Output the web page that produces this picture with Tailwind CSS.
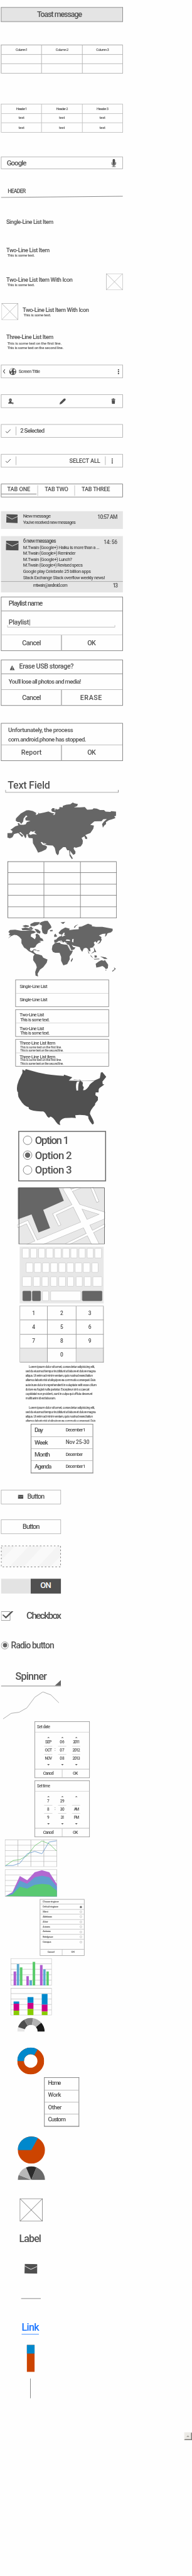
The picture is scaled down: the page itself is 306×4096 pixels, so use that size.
<!DOCTYPE html>
<html lang="en">
<head>
<meta charset="utf-8">
<title>Android wireframe stencils</title>
<script src="https://cdn.jsdelivr.net/npm/@tailwindcss/browser@4"></script>
</head>
<body class="bg-[#fefefe]">
<svg width="0" height="0" class="absolute">
  <symbol id="mail" viewBox="0 0 81 63"><path fill="#505050" d="M2 0L81 3 80 63 0 60Z"/><path d="M1 14L40 35 80 17" fill="none" stroke="#f4f4f4" stroke-width="3.5"/></symbol>
  <symbol id="check" viewBox="0 0 36 28"><path d="M2 15L12 25 34 2" fill="none" stroke="#505050" stroke-width="4"/></symbol>
  <symbol id="dots" viewBox="0 0 10 32"><path fill="#505050" d="M1 0h9v8h-9zM1 12h9v8h-9zM1 24h9v8h-9z"/></symbol>
  <symbol id="up" viewBox="0 0 16 9"><path fill="#606060" d="M0 9L8 0 16 9Z"/></symbol>
  <symbol id="down" viewBox="0 0 16 9"><path fill="#606060" d="M0 0L8 9 16 0Z"/></symbol>
  <symbol id="cross" viewBox="0 0 105 105" preserveAspectRatio="none"><rect x="1.5" y="1.5" width="102" height="102" fill="none" stroke="#aaa" stroke-width="3"/><path d="M1 1L104 104" stroke="#808080" stroke-width="2"/><path d="M104 1L1 104" stroke="#b5b5b5" stroke-width="3"/></symbol>
</svg>
<div class="h-[4096px] w-[306px] overflow-hidden">
<main class="flex w-[400px] h-[5362px] origin-top-left scale-x-[0.765] scale-y-[0.7639] flex-col items-start pt-[15px] font-['Roboto','Liberation_Sans',sans-serif] font-medium text-[#505050] whitespace-nowrap leading-none [&>*]:shrink-0">

  <!-- Toast -->
  <div class="ml-[2px] flex h-[31px] w-[254px] items-center justify-center border border-[#7a7a7a] border-b-2 border-b-[#b0b0b0] bg-[#e4e4e4] pr-[11px] text-[16px]"><span data-w="93">Toast message</span></div>

  <!-- Tables -->
  <div class="mt-[47px] ml-[2px] grid h-[60px] w-[254px] grid-cols-3 grid-rows-3 border-t border-l border-[#8e8e8e] text-[7.5px] [&>*]:flex [&>*]:items-center [&>*]:justify-center [&>*]:border-r [&>*]:border-b [&>*]:border-[#a5a5a5]">
    <div><span data-w="24">Column 1</span></div><div><span data-w="26">Column 2</span></div><div><span data-w="26">Column 3</span></div>
    <div></div><div></div><div></div><div></div><div></div><div></div>
  </div>
  <div class="mt-[63px] ml-[2px] grid h-[60px] w-[254px] grid-cols-3 grid-rows-3 border-t border-l border-[#b0b0b0] text-[7.5px] [&>*]:flex [&>*]:items-center [&>*]:justify-center [&>*]:border-r [&>*]:border-b [&>*]:border-[#b5b5b5]">
    <div><span data-w="22">Header 1</span></div><div><span data-w="24">Header 2</span></div><div><span data-w="24">Header 3</span></div>
    <div><span data-w="12">text</span></div><div><span data-w="12">text</span></div><div><span data-w="12">text</span></div>
    <div><span data-w="12">text</span></div><div><span data-w="12">text</span></div><div><span data-w="12">text</span></div>
  </div>

  <!-- Search -->
  <div class="mt-[50px] ml-[2px] flex h-[26px] w-[254px] items-center justify-between border border-[#a5a5a5] pr-[13px] pl-[11px] text-[15px]"><span data-w="40">Google</span>
    <svg class="h-[17px] w-[10px]" viewBox="0 0 30 51"><rect x="8" width="15" height="36" rx="7" fill="#505050"/><path d="M2 19V27Q4 39 15 39T28 27V19M15 39V47M4 48H27" fill="none" stroke="#505050" stroke-width="4"/></svg></div>

  <!-- Header -->
  <div class="mt-[38px] ml-[2px] h-[22px] w-[254px]"><div class="h-[17px] pt-[3px] pl-[14px] text-[11.5px]"><span data-w="37">HEADER</span></div><svg class="h-[5px] w-[254px]" viewBox="0 0 254 5"><path d="M0 4L254 1.5" stroke="#666"/></svg></div>

  <!-- List items -->
  <div class="mt-[44px] ml-[13px] h-[16px] text-[12px]"><span data-w="98">Single-Line List Item</span></div>
  <div class="mt-[43px] ml-[13px] h-[24px] text-[12px]"><span data-w="90">Two-Line List Item</span><p class="pt-px pl-[2px] text-[8px]"><span data-w="57">This is some text.</span></p></div>
  <div class="mt-[30px] ml-[13px] flex h-[35px] w-[242.5px] justify-between pt-0"><div class="pt-[8px] text-[12px]"><span data-w="138">Two-Line List Item With Icon</span><p class="pt-px pl-[2px] text-[8px]"><span data-w="57">This is some text.</span></p></div><svg class="size-[35px]"><use href="#cross"/></svg></div>
  <div class="mt-[27px] ml-[3px] flex h-[35px] gap-[9px]"><svg class="size-[35px]"><use href="#cross"/></svg><div class="pt-[8px] text-[12px]"><span data-w="138">Two-Line List Item With Icon</span><p class="pt-px pl-[2px] text-[8px]"><span data-w="57">This is some text.</span></p></div></div>
  <div class="mt-[30px] ml-[13px] h-[34px] text-[12px]"><span data-w="98">Three-Line List Item</span><div class="pt-[2px] pl-[2px] text-[8px] leading-[9px]"><p><span data-w="113">This is some text on the first line.</span></p><p><span data-w="117">This is some text on the second line.</span></p></div></div>

  <!-- Action bars -->
  <div class="mt-[29px] ml-[2px] flex h-[28px] w-[254px] items-center border border-[#a5a5a5] pr-[7px] pl-[3px] text-[9.5px]">
    <svg class="h-[10px] w-[5px]" viewBox="0 0 15 30"><path d="M13 3L3 15 13 27" fill="none" stroke="#505050" stroke-width="4"/></svg>
    <svg class="ml-[8px] size-[15px]" viewBox="0 0 45 45"><circle cx="22.500" cy="22.500" r="22" fill="#505050"/><path fill="#fefefe" d="M14 4L22 2 21 8 14 12 18 17 12 23 4 15 7 9ZM27 10L34 7 40 14 36 22 29 18ZM13 27L21 29 17 40 12 37ZM31 27L38 26 37 34 31 38Z"/></svg>
    <span class="ml-[5px]" data-w="44">Screen Title</span><svg class="ml-auto h-[11px] w-[3.500px]"><use href="#dots"/></svg></div>
  <div class="mt-[34px] ml-[2px] flex h-[28px] w-[254px] items-center justify-between border border-[#a5a5a5] pr-[15px] pl-[14px]">
    <svg class="h-[13px] w-[12px]" viewBox="0 0 36 39"><path fill="#505050" d="M5 10Q6 1 14 1T23 10Q23 18 18 22L26 27 27 33H0L2 26 10 22Q5 18 5 10Z"/><path d="M29 24V38M22 31H36" stroke="#505050" stroke-width="3"/><path d="M9 9H19V15H9Z" fill="#999"/></svg>
    <svg class="h-[13px] w-[13px]" viewBox="0 0 38 38"><path fill="#505050" d="M0 38L3 26 26 3Q32-2 36 3T35 13L13 33Z"/></svg>
    <svg class="h-[12px] w-[8.500px]" viewBox="0 0 26 36"><path fill="#505050" d="M0 5L8 4 9 0H17L18 4 26 5V10H0ZM2 12H24L22 36H4Z"/></svg></div>
  <div class="mt-[34px] ml-[2px] flex h-[28px] w-[254px] items-center border border-[#a5a5a5] pl-[8px] text-[12.5px]"><svg class="h-[9px] w-[12px]"><use href="#check"/></svg><i class="mr-[8px] ml-[10px] h-[18px] w-px bg-[#a5a5a5]"></i><span data-w="50">2 Selected</span></div>
  <div class="mt-[34px] ml-[2px] flex h-[28px] w-[254px] items-center border border-[#a5a5a5] pr-[20px] pl-[8px] text-[12px]"><svg class="h-[9px] w-[12px]"><use href="#check"/></svg><i class="ml-[10px] h-[18px] w-px bg-[#a5a5a5]"></i><span class="ml-auto" data-w="64">SELECT ALL</span><i class="mr-[12px] ml-[10px] h-[18px] w-px bg-[#a5a5a5]"></i><svg class="h-[11px] w-[3.500px]"><use href="#dots"/></svg></div>

  <!-- Tabs -->
  <div class="mt-[34px] ml-[2px] flex h-[28px] w-[254px] border border-[#6b6b6b] pt-[2px] text-[12px]">
    <div class="h-[19px] w-[73px] border-b border-[#606060] pt-[3px] pl-[12px]"><span data-w="48">TAB ONE</span></div>
    <div class="ml-[2px] h-[22px] w-[78px] border-x border-[#b5b5b5] pt-[3px] pl-[14px]"><span data-w="49">TAB TWO</span></div>
    <div class="pt-[3px] pl-[14px]"><span data-w="59">TAB THREE</span></div></div>

  <!-- Notifications -->
  <div class="mt-[29px] ml-[2px] flex h-[37px] w-[254px] bg-[#e5e5e5] pt-[6px] pr-[12px] pl-[11px] text-[10.5px]"><svg class="h-[19px] w-[24px]"><use href="#mail"/></svg>
    <div class="ml-[11px]"><p><span data-w="57">New message</span></p><p class="pt-[2px] text-[9.500px]"><span data-w="109">You've received new messages</span></p></div><span class="mt-px ml-auto text-[11px]" data-w="41">10:57 AM</span></div>
  <div class="mt-[15px] ml-[2px] h-[117px] w-[254px] bg-[#e5e5e5] text-[9.5px]">
    <div class="flex h-[95px] border-b border-[#999] pt-[5px] pr-[12px] pl-[10px]"><svg class="mt-[4px] h-[21px] w-[27px]"><use href="#mail"/></svg>
      <div class="ml-[9px] w-[150px] leading-[12.600px]"><p class="text-[11px]"><span data-w="68">6 new messages</span></p><p><span data-w="159">M.Twain (Google+) Haiku is more than a ...</span></p><p><span data-w="109">M.Twain (Google+) Reminder</span></p><p><span data-w="102">M.Twain (Google+) Lunch?</span></p><p><span data-w="124">M.Twain (Google+) Revised specs</span></p><p><span data-w="141">Google play Celebrate 25 billion apps</span></p><p><span data-w="170">Stack Exchange Stack overflow weekly news!</span></p></div>
      <span class="mt-[2px] ml-auto text-[11px]" data-w="28">14: 56</span></div>
    <div class="flex items-center justify-between pt-[3px] pr-[12px] pl-[67px] text-[9px]"><span data-w="71">mtwain@android.com</span><span class="text-[11px]" data-w="9">13</span></div></div>

  <!-- Dialogs -->
  <div class="mt-[9px] ml-[2px] flex h-[113px] w-[254px] flex-col border border-[#666] text-[14px]">
    <div class="h-[29px] border-b border-[#777] pt-[6px] pl-[15px]"><span data-w="70">Playlist name</span></div>
    <div class="h-[50px] border-b border-[#c5c5c5] px-[12px] pt-[16px]"><div class="h-[17px] pl-[3px]"><span data-w="45">Playlist|</span></div><svg class="-mt-[4px] h-[5px] w-[225px]" viewBox="0 0 225 5"><path d="M.5 0V4.500H224.500V0" fill="none" stroke="#999"/></svg></div>
    <div class="grid flex-1 grid-cols-2"><div class="flex items-center border-r-2 border-[#b0b0b0] pl-[43px]"><span data-w="39">Cancel</span></div><div class="flex items-center pl-[53px]"><span data-w="17">OK</span></div></div></div>
  <div class="mt-[18px] ml-[2px] flex h-[96px] w-[254px] flex-col border border-[#666] text-[14px]">
    <div class="flex h-[29px] items-start border-b border-[#777] pt-[6px] pl-[17px]"><svg class="mt-[5px] mr-[9px] h-[10px] w-[11px]" viewBox="0 0 32 30"><path fill="#505050" d="M15 0L32 30H0Z"/><path d="M16 11V20M16 23V27" stroke="#fefefe" stroke-width="3"/></svg><span data-w="113">Erase USB storage?</span></div>
    <div class="h-[33px] border-b border-[#a5a5a5] pt-[10px] pl-[15px] text-[12.500px]"><span data-w="150">You'll lose all photos and media!</span></div>
    <div class="grid flex-1 grid-cols-2"><div class="flex items-center border-r-2 border-[#b0b0b0] pl-[43px]"><span data-w="39">Cancel</span></div><div class="flex items-center pl-[38px]"><span data-w="46">ERASE</span></div></div></div>
  <div class="mt-[36px] ml-[2px] flex h-[79px] w-[254px] flex-col border border-[#666] text-[12.500px]">
    <div class="h-[45px] border-b border-[#aaa] pt-[4px] pl-[14px] leading-[20px]"><p><span data-w="135">Unfortunately, the process</span></p><p><span data-w="162">com.android.phone has stopped.</span></p></div>
    <div class="grid flex-1 grid-cols-2 text-[14px]"><div class="flex items-center border-r-2 border-[#b0b0b0] pb-[3px] pl-[41px]"><span data-w="43">Report</span></div><div class="flex items-center pb-[3px] pl-[53px]"><span data-w="17">OK</span></div></div></div>

  <!-- Text field -->
  <div class="mt-[41px] ml-[11px] h-[25px] w-[236px]"><div class="h-[19px] pl-[5px] text-[21px]"><span data-w="88">Text Field</span></div><svg class="h-[6px] w-[236px]" viewBox="0 0 236 6"><path d="M.5 0V5.500H235.500V0" fill="none" stroke="#666"/></svg></div>

  <!-- Eurasia -->
  <svg class="mt-[20px] ml-[15px] h-[119px] w-[227px]" viewBox="45 960 681 357"><path fill="#666" d="M46 1153L75 1152 78 1140 65 1131 75 1125 95 1110 115 1103 110 1092 120 1090 124 1100 145 1101 160 1098 168 1084 190 1076 160 1073 158 1058 172 1048 163 1042 148 1060 144 1082 132 1096 124 1084 110 1083 98 1075 100 1060 130 1030 165 1010 180 1009 205 1014 226 1026 224 1040 238 1034 240 1025 246 1030 275 1024 303 1017 322 1026 340 1030 345 1022 325 1018 320 1006 328 996 340 996 344 1014 348 998 356 1005 370 1001 372 990 392 992 393 982 415 975 440 972 455 961 464 966 487 971 482 984 462 992 500 992 530 990 545 1006 578 1004 585 997 605 999 625 1008 650 1008 660 1018 690 1020 695 1015 725 1018 725 1045 714 1048 722 1058 700 1066 680 1072 662 1084 663 1096 652 1104 643 1118 638 1096 650 1080 668 1064 645 1066 635 1078 590 1079 564 1101 587 1105 583 1125 565 1152 542 1160 533 1165 545 1180 544 1190 533 1188 528 1172 510 1182 518 1200 516 1218 505 1235 475 1244 463 1240 460 1250 472 1268 470 1282 458 1288 445 1272 438 1262 438 1282 455 1310 450 1316 435 1294 432 1260 420 1260 410 1240 395 1240 370 1263 367 1282 360 1291 350 1278 342 1244 330 1230 300 1228 280 1224 262 1208 254 1210 266 1225 285 1230 295 1238 288 1254 262 1266 238 1274 225 1248 206 1215 204 1185 180 1182 172 1165 178 1160 165 1160 164 1178 158 1184 148 1165 128 1146 120 1150 146 1168 138 1177 114 1152 98 1156 88 1158 78 1178 62 1185 46 1180Z"/><path fill="#fefefe" d="M180 1157L192 1140 204 1145 222 1138 214 1148 230 1160 205 1158 190 1163ZM275 1213L292 1220 278 1222ZM340 1030L348 1020 342 1038 330 1040Z"/></svg>

  <!-- Empty grid -->
  <div class="mt-[4px] ml-[16px] grid h-[118px] w-[227px] grid-cols-3 grid-rows-5 border-t border-l border-[#555] [&>*]:border-r [&>*]:border-b [&>*]:border-[#6c6c6c]"><i></i><i></i><i></i><i></i><i></i><i></i><i></i><i></i><i></i><i></i><i></i><i></i><i></i><i></i><i></i></div>

  <!-- World -->
  <svg class="mt-[5px] ml-[16px] h-[117px] w-[226px]" viewBox="48 348 678 351"><path fill="#666" d="M52 420L62 407 95 405 132 412 160 412 190 408 210 412 225 420 212 428 195 432 192 448 205 455 218 465 225 450 222 435 232 430 245 440 252 455 266 462 272 476 245 475 258 482 240 490 228 500 222 512 212 518 190 518 186 532 195 540 205 535 215 526 208 540 216 550 228 558 240 560 262 566 270 580 297 592 292 612 270 640 250 655 235 680 238 698 222 692 220 670 230 640 224 620 207 596 208 572 216 560 200 550 180 540 158 520 145 496 160 524 150 516 134 490 134 465 120 450 105 440 88 438 70 446 50 460 68 442 54 440 62 428ZM256 358L280 350 298 350 318 380 322 392 300 408 294 432 280 434 266 425 260 400 262 380 244 370ZM312 408L328 406 330 414 314 416ZM134 398L160 392 190 398 210 394 200 406 170 408 140 408ZM140 382L160 376 180 380 180 388 155 390ZM190 370L215 358 250 358 240 374 215 384 190 382ZM215 400L238 404 254 418 250 430 232 425ZM184 388H200V396H184ZM378 360L408 356 395 370ZM462 392Q466 378 490 373Q470 382 468 395ZM338 470L352 466 360 456 372 448 382 446 385 436 370 432 366 424 382 406 408 392 436 400 432 408 460 404 492 402 492 388 510 386 550 368 575 376 574 384 600 388 640 388 704 400 704 412 694 422 672 428 664 444 656 450 660 430 640 432 618 442 634 452 630 470 612 474 604 488 596 478 586 486 592 500 580 516 562 520 566 540 556 540 548 524 538 518 524 522 514 544 504 530 498 514 460 506 448 500 458 514 472 516 464 528 442 536 424 500 412 488 424 486 410 486 404 480 396 486 382 472 376 474 396 488 370 474 358 482 352 486 340 486ZM344 488L374 486 380 494 400 498 420 500 440 538 456 536 448 555 435 572 436 590 420 620 396 628 382 600 382 575 372 550 345 550 330 544 324 528 328 505ZM442 600L452 582 456 588 446 608ZM338 440L346 430 358 448 340 452ZM630 455L636 468 626 488 608 496 622 482ZM586 512L594 530 602 545 590 546ZM568 556L590 538 586 548ZM546 530L560 555 554 554ZM565 562L580 580 585 586 568 572ZM586 588L620 586 622 590 590 592ZM590 566L604 566 606 578 592 580ZM626 572L660 578 672 588 652 588 640 580ZM598 618L618 604 634 596 650 600 655 594 676 624 674 646 662 652 652 640 640 632 622 638 602 642ZM658 656H666L662 662ZM712 640L724 650 704 668 700 664 716 652ZM208 528L224 530 232 536 208 532ZM232 535H246V539H232ZM68 530L76 534 72 532Z"/><path fill="#fefefe" d="M410 474L416 466 434 468 440 476ZM452 464L460 462 458 486 450 480ZM386 440L398 424 405 426 400 438 410 440 396 446 388 450ZM424 500L430 500 446 532 442 534Z"/></svg>

  <!-- Lists -->
  <div class="mt-[6px] ml-[32px] grid h-[57px] w-[195px] grid-rows-2 border border-[#777] text-[10px]"><div class="flex items-center border-b border-[#ccc] pl-[8px]"><span data-w="57">Single-Line List</span></div><div class="flex items-center pl-[8px]"><span data-w="57">Single-Line List</span></div></div>
  <div class="mt-[5px] ml-[32px] grid h-[57px] w-[195px] grid-rows-2 border border-[#777] text-[10px]"><div class="border-b border-[#ccc] pt-[6px] pl-[8px]"><p><span data-w="50">Two-Line List</span></p><p class="pt-px pl-px text-[9px]"><span data-w="61">This is some text.</span></p></div><div class="pt-[6px] pl-[8px]"><p><span data-w="50">Two-Line List</span></p><p class="pt-px pl-px text-[9px]"><span data-w="61">This is some text.</span></p></div></div>
  <div class="mt-[5px] ml-[32px] grid h-[57px] w-[195px] grid-rows-2 border border-[#777] text-[9.500px]"><div class="border-b border-[#ccc] pt-[3px] pl-[8px]"><p><span data-w="74">Three-Line List Item</span></p><div class="pl-px text-[6.500px] leading-[7px]"><p><span data-w="86">This is some text on the first line.</span></p><p><span data-w="90">This is some text on the second line.</span></p></div></div><div class="pt-[3px] pl-[8px]"><p><span data-w="74">Three-Line List Item</span></p><div class="pl-px text-[6.500px] leading-[7px]"><p><span data-w="86">This is some text on the first line.</span></p><p><span data-w="90">This is some text on the second line.</span></p></div></div></div>

  <!-- United States -->
  <svg class="mt-[5px] ml-[35px] h-[117px] w-[187px]" viewBox="105 -75 561 351"><path fill="#505050" d="M140 -72L156 -64 161 -74 240 -52Q320 -34 398 -32L400 -39 452 -23 430 -3 462 -10 500 -8 507 0 588 -2 624 -18 630 -52 640 -55 664 -26 640 4 642 20 652 22 622 44 617 52 616 72 598 72 596 88 612 100 612 120 595 140 594 150Q562 184 562 205L580 240Q590 260 585 268L577 272 562 252 553 236 551 220 530 214 498 212 470 214 474 232 450 230 405 232Q374 240 373 262L377 276 362 270 350 256Q330 224 314 223L306 231 295 222Q280 192 270 190 200 192 180 174L180 165Q150 160 122 112 110 95 113 72 102 65 108 25L118 -5 140 -50Z"/><path fill="#fefefe" d="M478 60Q470 20 482 4L498 3Q488 10 488 60ZM506 3L528 0H590Q558 20 556 32 535 62 519 57L524 40 516 28 518 10ZM430 -2L452 -12 468 -22 460 -8 490 -10 505 -1Z"/></svg>

  <!-- Radio group -->
  <div class="mt-[12px] ml-[38px] flex h-[105px] w-[183px] flex-col gap-[12px] border-2 border-[#6a6a6a] pt-[8px] pl-[8px] text-[22px]">
    <div class="flex h-[19px] items-center gap-[6px]"><i class="size-[19px] rounded-full border border-[#666]"></i><span data-w="69">Option 1</span></div>
    <div class="flex h-[19px] items-center gap-[6px]"><i class="flex size-[19px] items-center justify-center rounded-full border border-[#666]"><i class="size-[11px] rounded-full bg-[#666]"></i></i><span data-w="76">Option 2</span></div>
    <div class="flex h-[19px] items-center gap-[6px]"><i class="size-[19px] rounded-full border border-[#666]"></i><span data-w="76">Option 3</span></div></div>

  <!-- Street map -->
  <svg class="mt-[12px] ml-[36px] h-[119px] w-[183px]" viewBox="108 660 549 357"><rect x="112" y="664" width="541" height="352" fill="#e8e8e8"/>
    <g fill="none" stroke-linejoin="miter"><g stroke="#b8b8b8"><path stroke-width="19" d="M108 906L170 878 228 998M374 900L340 830 460 774"/><path stroke-width="18" d="M412 1020L560 948 660 896M448 680L500 660M573 660L612 754"/><path stroke-width="46" d="M412 660L475 770 600 1024"/><path stroke-width="42" d="M170 1038L300 984 540 885 660 834"/><path stroke-width="26" d="M490 778L660 830"/></g>
    <g stroke="#fefefe"><path stroke-width="14" d="M110 905L170 878 228 998M373 898L340 830 460 774"/><path stroke-width="13" d="M412 1020L560 948 660 896M448 680L500 660M573 660L611 751"/><path stroke-width="41" d="M412 660L475 770 600 1024"/><path stroke-width="37" d="M170 1038L300 984 540 885 660 834"/><path stroke-width="21" d="M490 778L660 830"/></g></g>
    <path fill="#666" d="M112 664H366L399 745 270 802 313 916 241 943 197 830 112 861Z"/><rect x="118.500" y="664.500" width="534" height="351" fill="none" stroke="#484848" stroke-width="3"/></svg>

  <!-- Keyboard -->
  <div class="mt-[5px] ml-[41px] flex h-[118px] w-[175px] flex-col gap-[8.500px] bg-[#e8e8e8] pt-[3px] [&>div]:flex [&>div]:h-[21px] [&>div]:justify-between [&_i]:w-[14.500px] [&_i]:rounded-[2px] [&_i]:border [&_i]:border-[#ccc] [&_i]:bg-[#fefefe]">
    <div class="pr-[4px] pl-[5px]"><i></i><i></i><i></i><i></i><i></i><i></i><i></i><i></i><i></i><i></i></div>
    <div class="pr-[11px] pl-[13px]"><i></i><i></i><i></i><i></i><i></i><i></i><i></i><i></i><i></i></div>
    <div class="pr-[3px] pl-[5px]"><i class="w-[20px]!"></i><i></i><i></i><i></i><i></i><i></i><i></i><i></i><i class="w-[20px]!"></i></div>
    <div class="pr-[3px] pl-[6px]"><i class="w-[18px]! border-[#666]! bg-[#666]!"></i><i class="w-[18px]! border-[#666]! bg-[#666]!"></i><i></i><i class="w-[64px]!"></i><i class="w-[42px]! border-[#666]! bg-[#666]!"></i></div></div>

  <!-- Keypad -->
  <div class="mt-[5px] ml-[41px] grid h-[118px] w-[175px] grid-cols-[57px_60px_57px] grid-rows-4 border-t border-l border-[#aaa] bg-[#fefefe] text-[11px] [&>*]:flex [&>*]:items-center [&>*]:justify-center [&>*]:border-r [&>*]:border-b [&>*]:border-[#888]">
    <div>1</div><div>2</div><div>3</div><div>4</div><div>5</div><div>6</div><div>7</div><div>8</div><div>9</div><div class="bg-[#e8e8e8]"></div><div>0</div><div class="bg-[#e8e8e8]"></div></div>

  <!-- Paragraphs -->
  <div class="mt-[5px] ml-[53px] h-[118px] w-[160px] overflow-hidden text-[6.500px] leading-[9.450px]">
    <p class="pl-[7px]"><span data-w="137">Lorem ipsum dolor sit amet, consectetur adipisicing elit,</span></p><p><span data-w="146">sed do eiusmod tempor incididunt ut labore et dolore magna</span></p><p><span data-w="140">aliqua. Ut enim ad minim veniam, quis nostrud exercitation</span></p><p><span data-w="146">ullamco laboris nisi ut aliquip ex ea commodo consequat. Duis</span></p><p><span data-w="148">aute irure dolor in reprehenderit in voluptate velit esse cillum</span></p><p><span data-w="133">dolore eu fugiat nulla pariatur. Excepteur sint occaecat</span></p><p><span data-w="139">cupidatat non proident, sunt in culpa qui officia deserunt</span></p><p><span data-w="63">mollit anim id est laborum.</span></p>
    <p class="pt-[9.450px] pl-[7px]"><span data-w="137">Lorem ipsum dolor sit amet, consectetur adipisicing elit,</span></p><p><span data-w="146">sed do eiusmod tempor incididunt ut labore et dolore magna</span></p><p><span data-w="140">aliqua. Ut enim ad minim veniam, quis nostrud exercitation</span></p><p><span data-w="146">ullamco laboris nisi ut aliquip ex ea commodo consequat. Duis</span></p></div>

  <!-- Calendar menu -->
  <div class="mt-[5px] ml-[64px] grid h-[103px] w-[130px] grid-rows-4 border border-[#666] border-b-2 border-b-[#999] text-[13px] [&>div]:grid [&>div]:grid-cols-[65px_1fr] [&>div]:items-center [&>div]:pb-[2px] [&>div]:pl-[7px] [&>div+div]:border-t [&>div+div]:border-[#aaa]">
    <div><p><span data-w="16">Day</span></p><p class="text-[10px]"><span data-w="40">December 1</span></p></div><div><p><span data-w="27">Week</span></p><p class="text-[11px]"><span data-w="49">Nov 25-30</span></p></div><div><p><span data-w="31">Month</span></p><p class="text-[10px]"><span data-w="34">December</span></p></div><div><p><span data-w="34">Agenda</span></p><p class="text-[10px]"><span data-w="40">December 1</span></p></div></div>

  <!-- Buttons -->
  <div class="mt-[34px] ml-[2px] flex h-[30px] w-[125px] items-center border border-[#a8a8a8] pb-[2px] pl-[34px] text-[14px]"><svg class="mr-[8px] h-[9px] w-[12px]"><use href="#mail"/></svg><span data-w="35">Button</span></div>
  <div class="mt-[32px] ml-[2px] flex h-[30px] w-[125px] items-center justify-center border border-[#a8a8a8] pb-[3px] text-[14px]"><span data-w="35">Button</span></div>
  <svg class="mt-[24px] ml-[2px] h-[45px] w-[125px]" viewBox="0 0 375 135"><rect width="375" height="135" fill="#f9f9f9"/><path fill="#f4f4f4" d="M0 0H92L0 92ZM178 0H265L142 132H54ZM355 0H375V65L308 132H232Z"/><rect x="1.500" y="1.500" width="372" height="132" fill="none" stroke="#222" stroke-width="3" stroke-dasharray="9 13"/></svg>

  <!-- Switch -->
  <div class="mt-[24px] ml-[2px] flex h-[31px] w-[125px] bg-[#e3e3e3]"><div class="ml-auto flex h-full w-[63px] items-center bg-[#505050] pb-[4px] pl-[20px] text-[17px] text-white"><span data-w="22">ON</span></div></div>

  <!-- Checkbox and radio -->
  <div class="mt-[37px] ml-[2px] flex h-[20px] items-center gap-[27px] text-[20px]"><svg class="h-[20px] w-[26px]" viewBox="0 0 78 60"><path d="M1.500 1.500H57V57H1.500Z" fill="none" stroke="#808080" stroke-width="3"/><path d="M8 22L15 20 31 33 60 4 66 0H78L31 45Z" fill="#505050"/></svg><span class="-mt-[2px]" data-w="71">Checkbox</span></div>
  <div class="mt-[42px] ml-[2px] flex h-[17px] items-center gap-[5px] text-[18px]"><i class="flex size-[16px] items-center justify-center rounded-full border border-[#777]"><i class="size-[9px] rounded-full bg-[#666]"></i></i><span data-w="89">Radio button</span></div>

  <!-- Spinner -->
  <div class="mt-[46px] ml-[2px] flex h-[31px] w-[125px] items-end justify-between border-b border-[#666] pl-[30px] text-[21px]"><span class="mb-[9px]" data-w="65">Spinner</span><svg class="h-[12px] w-[13px]" viewBox="0 0 13 12"><path fill="#666" d="M0 12L13 0V12Z"/></svg></div>

  <!-- Line -->
  <svg class="mt-[11px] ml-[6px] h-[58px] w-[118px]" viewBox="18 1110 354 174"><path d="M19 1281L70 1246 120 1239 168 1212 218 1145 268 1112 318 1131 368 1180" fill="none" stroke="#808080" stroke-width="2.500"/></svg>

  <!-- Pickers -->
  <div class="mt-[4px] ml-[72px] flex h-[118px] w-[115px] flex-col border border-[#888] text-[8.500px]">
    <div class="h-[22px] border-b border-[#ccc] pt-[6px] pl-[4px]"><span data-w="27">Set date</span></div>
    <div class="flex h-[77px] border-b border-[#aaa] pt-[9px] pl-[19px] [&>div]:flex [&>div]:w-[17px] [&>div]:flex-col [&>div]:items-center [&_p]:flex [&_p]:h-[17px] [&_p]:w-full [&_p]:items-center [&_p]:justify-center [&_p]:border-b [&_p]:border-[#ccc] [&_svg]:h-[3px] [&_svg]:w-[6px]">
      <div><svg><use href="#up"/></svg><p><span data-w="13">SEP</span></p><p><span data-w="14">OCT</span></p><p class="border-0!"><span data-w="14">NOV</span></p><svg class="mt-[3px]"><use href="#down"/></svg></div>
      <span class="w-[12px] pt-[23px] text-center">:</span>
      <div><svg><use href="#up"/></svg><p><span data-w="10">06</span></p><p><span data-w="10">07</span></p><p class="border-0!"><span data-w="10">08</span></p><svg class="mt-[3px]"><use href="#down"/></svg></div>
      <div class="ml-[12px]"><svg><use href="#up"/></svg><p><span data-w="13">2011</span></p><p><span data-w="15">2012</span></p><p class="border-0!"><span data-w="15">2013</span></p><svg class="mt-[3px]"><use href="#down"/></svg></div></div>
    <div class="grid flex-1 grid-cols-2 text-[9px]"><div class="flex items-center border-r border-[#bbb] pl-[17px]"><span data-w="21">Cancel</span></div><div class="flex items-center pl-[22px]"><span data-w="10">OK</span></div></div></div>
  <div class="mt-[5px] ml-[72px] flex h-[118px] w-[115px] flex-col border border-[#888] text-[8.500px]">
    <div class="h-[22px] border-b border-[#ccc] pt-[6px] pl-[4px]"><span data-w="27">Set time</span></div>
    <div class="flex h-[77px] border-b border-[#aaa] pt-[9px] pl-[19px] [&>div]:flex [&>div]:w-[17px] [&>div]:flex-col [&>div]:items-center [&_p]:flex [&_p]:h-[17px] [&_p]:w-full [&_p]:items-center [&_p]:justify-center [&_p]:border-b [&_p]:border-[#ccc] [&_svg]:h-[3px] [&_svg]:w-[6px]">
      <div><svg><use href="#up"/></svg><p>7</p><p>8</p><p class="border-0!">9</p><svg class="mt-[3px]"><use href="#down"/></svg></div>
      <span class="w-[12px] pt-[23px] text-center">:</span>
      <div><svg><use href="#up"/></svg><p><span data-w="9">29</span></p><p><span data-w="9">30</span></p><p class="border-0!"><span data-w="7">31</span></p><svg class="mt-[3px]"><use href="#down"/></svg></div>
      <div class="ml-[12px]"><svg><use href="#up"/></svg><p></p><p><span data-w="9">AM</span></p><p class="border-0!"><span data-w="9">PM</span></p><svg class="mt-[3px]"><use href="#down"/></svg></div></div>
    <div class="grid flex-1 grid-cols-2 text-[9px]"><div class="flex items-center border-r border-[#bbb] pl-[17px]"><span data-w="21">Cancel</span></div><div class="flex items-center pl-[22px]"><span data-w="10">OK</span></div></div></div>

  <!-- Charts -->
  <svg class="mt-[5px] ml-[10px] h-[57px] w-[109px]" viewBox="30 684 327 171"><path d="M31 719H355M31 753H355M31 787H355M31 821H355" stroke="#d2d2d2" stroke-width="4"/><path d="M112 685V853M193 685V853M274 685V853" stroke="#a5a5a5" stroke-width="2.500"/><rect x="31.500" y="685.500" width="324" height="168" fill="none" stroke="#bbb" stroke-width="3"/><g fill="none" stroke-width="3"><path stroke="#5fbf5f" d="M34 848L82 815 125 809 170 784 217 723 262 693 308 711 353 755"/><path stroke="#5b8fc9" d="M34 846H82L125 831 170 773 217 758 262 773 306 700 353 692"/></g></svg>
  <svg class="mt-[5px] ml-[10px] h-[57px] w-[109px]" viewBox="30 870 327 171"><path d="M31 905H355M31 939H355M31 973H355M31 1007H355" stroke="#d2d2d2" stroke-width="4"/><rect x="31.500" y="871.500" width="324" height="168" fill="none" stroke="#bbb" stroke-width="3"/><path fill="#b368d1" d="M34 1038L78 1012 124 912 170 938 217 888 262 876 308 888 355 962V1040Z"/><path fill="#609fce" d="M34 1038L78 1018 124 940 170 960 217 920 262 910 308 920 355 978V1040Z"/><path fill="#59c972" d="M34 1038L78 1027 124 979 170 990 217 967 262 961 308 966 355 1003V1040Z"/></svg>

  <!-- Ringtones -->
  <div class="mt-[5px] ml-[83px] flex h-[118px] w-[93px] flex-col border border-[#999] text-[5.500px] [&>div]:flex [&>div]:h-[10.400px] [&>div]:items-center [&>div]:justify-between [&>div]:border-b [&>div]:border-[#bbb] [&>div]:pr-[4px] [&>div]:pl-[5px] [&_i]:size-[5px] [&_i]:rounded-full [&_i]:border [&_i]:border-[#bbb]">
    <div><span data-w="33">Choose ringtone</span></div><div><span data-w="32">Default ringtone</span><i class="border-[#aaa]! bg-[#505050]"></i></div><div><span data-w="11">Silent</span><i></i></div><div><span data-w="19">Aldebaran</span><i></i></div><div><span data-w="11">Altair</span><i></i></div><div><span data-w="15">Antares</span><i></i></div><div><span data-w="16">Arcturus</span><i></i></div><div><span data-w="21">Betelgeuse</span><i></i></div><div class="border-0!"><span data-w="17">Canopus</span><i></i></div>
    <section class="mt-auto grid h-[13px] grid-cols-2 border-t border-[#aaa]"><p class="flex items-center border-r border-[#bbb] pl-[15px]"><span data-w="14">Cancel</span></p><p class="flex items-center pl-[19px]"><span data-w="7">OK</span></p></section></div>

  <!-- Bar charts -->
  <svg class="mt-[5px] ml-[22px] h-[57px] w-[86px]" viewBox="66 75 258 171"><path d="M67 110H323M67 144H323M67 178H323M67 212H323" stroke="#c8c8c8" stroke-width="3.500"/><rect x="67.500" y="76.500" width="255" height="168" fill="none" stroke="#bbb" stroke-width="3"/><path fill="#af5bd0" d="M85 158h16v87H85zM165 187h15v58h-15zM250 118h16v127h-16z"/><path fill="#5aaad0" d="M105 112h15v133h-15zM184 214h16v31h-16zM270 144h15v101h-15z"/><path fill="#5bcc6b" d="M124 132h16v113h-16zM204 98h16v147h-16zM290 158h15v87h-15z"/></svg>
  <svg class="mt-[5px] ml-[22px] h-[57px] w-[86px]" viewBox="66 261 258 171"><path d="M67 296H323M67 330H323M67 364H323M67 398H323" stroke="#c8c8c8" stroke-width="3.500"/><rect x="67.500" y="262.500" width="255" height="168" fill="none" stroke="#bbb" stroke-width="3"/><path fill="#08c" d="M85 345h35v14H85zM172 318h37v36h-37zM261 298h36v67h-36z"/><path fill="#c08" d="M85 359h35v43H85zM172 354h37v38h-37zM261 365h36v43h-36z"/><path fill="#8c0" d="M85 402h35v29H85zM172 392h37v39h-37zM261 408h36v23h-36z"/></svg>

  <!-- Gauge -->
  <svg class="mt-[5px] ml-[36px] h-[29px] w-[57px]" viewBox="108 447 171 87"><path fill="#e6e6e6" d="M108 534A86 86 0 0 1 113 505L155 518A42 42 0 0 0 153 534Z"/><path fill="#4d4d4d" d="M113 505A86 86 0 0 1 151 459L173 497A42 42 0 0 0 155 518Z"/><path fill="#808080" d="M151 459A86 86 0 0 1 207 449L200 492A42 42 0 0 0 173 497Z"/><path fill="#b3b3b3" d="M207 449A86 86 0 0 1 258 478L225 505A42 42 0 0 0 200 492Z"/><path fill="#1a1a1a" d="M258 478A86 86 0 0 1 279 534H235A42 42 0 0 0 225 505Z"/></svg>

  <!-- Donut -->
  <svg class="mt-[33px] ml-[36px] h-[56px] w-[56px]" viewBox="108 633 168 168"><circle cx="192" cy="717" r="63" fill="none" stroke="#c40" stroke-width="42"/><path fill="#08c" d="M108 717A84 84 0 0 1 235 645L214 681A42 42 0 0 0 150 717Z"/></svg>

  <!-- Menu -->
  <div class="mt-[6px] ml-[92px] grid h-[103px] w-[73px] grid-rows-4 border border-[#666] border-b-2 border-b-[#999] text-[12.500px] [&>div]:flex [&>div]:items-center [&>div]:pb-[3px] [&>div]:pl-[7px] [&>div+div]:border-t [&>div+div]:border-[#aaa]"><div><span data-w="25">Home</span></div><div><span data-w="27">Work</span></div><div><span data-w="28">Other</span></div><div><span data-w="36">Custom</span></div></div>

  <!-- Pies -->
  <svg class="mt-[20px] ml-[36.500px] h-[57px] w-[57px]" viewBox="110 1188 171 171"><circle cx="195" cy="1273" r="85" fill="#c40"/><path fill="#08c" d="M195 1273H110A85 85 0 0 1 236 1199Z"/></svg>
  <svg class="mt-[5px] ml-[36.500px] h-[29px] w-[57px]" viewBox="110 24 171 87"><path fill="#777" d="M195 110H110A85 85 0 0 1 116 78Z"/><path fill="#b8b8b8" d="M195 110L116 78A85 85 0 0 1 162 32Z"/><path fill="#2b2b2b" d="M195 110L162 32A85 85 0 0 1 227 31Z"/><path fill="#6a6a6a" d="M195 110L227 31A85 85 0 0 1 280 110Z"/></svg>

  <!-- Image, label, icon -->
  <svg class="mt-[38px] ml-[41px] size-[48px]" viewBox="0 0 48 48"><path d="M.5 .5H47.500V47.500H.5ZL47.500 47.500M47.500 .5L.5 47.500" fill="none" stroke="#5a5a5a"/></svg>
  <div class="mt-[27px] ml-[40px] h-[18px] text-[21px] leading-[18px]"><span data-w="45">Label</span></div>
  <svg class="mt-[43px] ml-[51px] h-[21px] w-[27px]"><use href="#mail"/></svg>
  <div class="mt-[51px] ml-[44px] h-px w-[41px] bg-[#666]"></div>
  <div class="mt-[51px] ml-[45px] h-[23px] border-b border-[#1a75ff] text-[21px] leading-[19px] text-[#1a75ff]"><span data-w="36">Link</span></div>
  <div class="mt-[22px] ml-[56px] flex h-[56px] w-[16px] flex-col bg-[#c40]"><div class="h-[18px] bg-[#08c]"></div></div>
  <div class="mt-[14px] ml-[63px] h-[41px] w-px bg-[#666]"></div>

  <!-- Scroll arrow -->
  <div class="mt-[71px] ml-[384px] flex size-[16px] items-center justify-center border-r-2 border-b-2 border-t border-l border-t-[#f0eeea] border-r-[#7c7a76] border-b-[#7c7a76] border-l-[#f0eeea] bg-[#eceae6]"><svg class="h-[4px] w-[7px]" viewBox="0 0 7 4"><path fill="#aaa8a4" d="M0 4L3.500 0 7 4Z"/></svg></div>
</main>
</div>
<script>
  // Track every label so that it takes up its intended width.
  // Repeated when the sheet is resized, since styles and fonts can settle after parsing.
  const sheet = document.querySelector('main');
  const labels = [...document.querySelectorAll('[data-w]')];
  function fit() {
    const scale = sheet.getBoundingClientRect().width / sheet.offsetWidth;
    labels.forEach(el => { el.style.letterSpacing = '0px'; });
    const widths = labels.map(el => el.getBoundingClientRect().width / scale);
    labels.forEach((el, i) => {
      el.style.letterSpacing = (el.dataset.w - widths[i]) / el.textContent.length + 'px';
    });
  }
  fit();
  new ResizeObserver(fit).observe(sheet);
  addEventListener('load', fit);
  document.fonts.ready.then(fit);
  requestAnimationFrame(() => requestAnimationFrame(fit));
  [50, 200].forEach(ms => setTimeout(fit, ms));
</script>
</body>
</html>
